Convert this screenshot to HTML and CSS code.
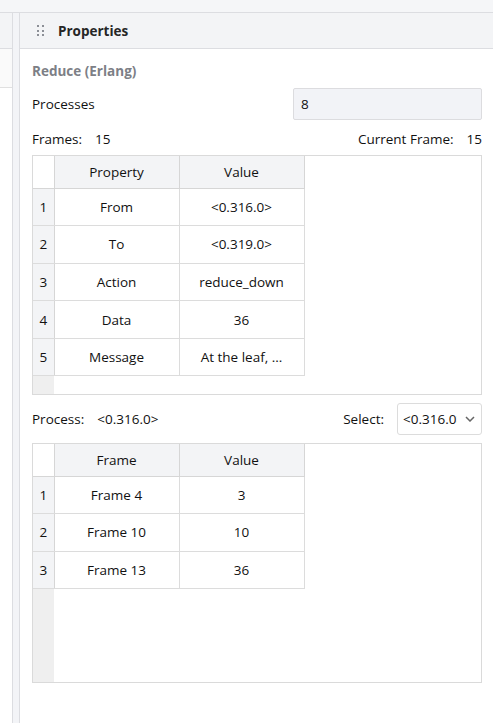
FILE: index.html
```html
<!DOCTYPE html>
<html>
<head>
<meta charset="utf-8">
<link rel="stylesheet" href="styles.css">
</head>
<body>
<div class="topbar"></div>
<div class="main">
  <div class="leftpanel">
    <div class="lp-head"></div>
    <div class="lp-sub"></div>
  </div>
  <div class="splitter"></div>
  <div class="panel">
    <div class="panel-head">
      <svg class="grip" width="8" height="12" viewBox="0 0 8 12">
        <rect x="0" y="0" width="2" height="2" fill="#8c8f96"/>
        <rect x="5" y="0" width="2" height="2" fill="#8c8f96"/>
        <rect x="0" y="5" width="2" height="2" fill="#8c8f96"/>
        <rect x="5" y="5" width="2" height="2" fill="#8c8f96"/>
        <rect x="0" y="9" width="2" height="2" fill="#8c8f96"/>
        <rect x="5" y="9" width="2" height="2" fill="#8c8f96"/>
      </svg>
      <span class="panel-title">Properties</span>
    </div>
    <div class="panel-body">
      <div class="section-title">Reduce (Erlang)</div>
      <div class="field-row">
        <span>Processes</span>
        <input class="num-input" type="text" value="8">
      </div>
      <div class="info-row">
        <span>Frames:<span class="val">15</span></span>
        <span>Current Frame:<span class="val">15</span></span>
      </div>
      <div class="grid-box">
        <table class="grid">
          <thead>
            <tr><th class="corner"></th><th>Property</th><th>Value</th></tr>
          </thead>
          <tbody>
            <tr><td class="rn">1</td><td>From</td><td>&lt;0.316.0&gt;</td></tr>
            <tr><td class="rn">2</td><td>To</td><td>&lt;0.319.0&gt;</td></tr>
            <tr><td class="rn">3</td><td>Action</td><td>reduce_down</td></tr>
            <tr><td class="rn">4</td><td>Data</td><td>36</td></tr>
            <tr><td class="rn">5</td><td>Message</td><td>At the leaf, ...</td></tr>
          </tbody>
        </table>
      </div>
      <div class="field-row proc-row">
        <span>Process:<span class="val">&lt;0.316.0&gt;</span></span>
        <span class="sel-wrap">
          <span class="sel-label">Select:</span>
          <span class="select">
            <select class="sel"><option>&lt;0.316.0&gt;</option></select>
            <svg class="chev" width="10" height="6" viewBox="0 0 10 6"><path d="M1 1 L5 5 L9 1" fill="none" stroke="#666" stroke-width="1.5"/></svg>
          </span>
        </span>
      </div>
      <div class="grid-box">
        <table class="grid">
          <thead>
            <tr><th class="corner"></th><th>Frame</th><th>Value</th></tr>
          </thead>
          <tbody>
            <tr><td class="rn">1</td><td>Frame 4</td><td>3</td></tr>
            <tr><td class="rn">2</td><td>Frame 10</td><td>10</td></tr>
            <tr><td class="rn">3</td><td>Frame 13</td><td>36</td></tr>
          </tbody>
        </table>
      </div>
    </div>
  </div>
</div>
</body>
</html>
```
FILE: styles.css
```css
* { box-sizing: border-box; }
html, body { margin: 0; padding: 0; background: #fff; }
body {
  font-family: "Open Sans", "Noto Sans", sans-serif;
  font-size: 13.5px;
  color: #111;
  width: 493px;
  height: 723px;
  overflow: hidden;
}
.topbar {
  height: 13px;
  background: #f5f6f8;
  border-bottom: 1px solid #dcdde1;
}
.main {
  display: flex;
  height: 710px;
}
.leftpanel {
  width: 12px;
  flex: none;
}
.lp-head {
  height: 36px;
  background: #f3f4f6;
  border-bottom: 1px solid #dcdde1;
}
.lp-sub {
  height: 39px;
  background: #fafafa;
  border-bottom: 1px solid #e0e0e0;
}
.splitter {
  width: 8px;
  flex: none;
  background: #f3f4f7;
  border-left: 1px solid #dcdde1;
  border-right: 1px solid #dcdde1;
}
.panel {
  flex: 1;
  display: flex;
  flex-direction: column;
}
.panel-head {
  height: 36px;
  background: #f3f4f6;
  border-bottom: 1px solid #dcdde1;
  display: flex;
  align-items: center;
  padding-left: 17px;
}
.grip { display: block; margin-top: 1px; }
.panel-title {
  margin-left: 13px;
  font-weight: 700;
  font-size: 13.5px;
  color: #262626;
}
.panel-body {
  padding: 12px 11px 0 12px;
  display: flex;
  flex-direction: column;
}
.section-title {
  height: 20px;
  line-height: 20px;
  font-weight: 700;
  color: #7d7f86;
}
.field-row {
  margin-top: 7px;
  height: 32px;
  display: flex;
  align-items: center;
  justify-content: space-between;
}
.num-input {
  width: 189px;
  height: 32px;
  background: #f2f3f7;
  border: 1px solid #dcdcdf;
  border-radius: 2px;
  padding: 0 7px;
  font: inherit;
  color: #111;
  outline: none;
}
.info-row {
  margin-top: 9px;
  height: 20px;
  line-height: 20px;
  display: flex;
  justify-content: space-between;
}
.val { margin-left: 13px; }
.grid-box {
  margin-top: 6px;
  height: 240px;
  border: 1px solid #dadada;
  background: linear-gradient(to right, #efefef 0, #efefef 21px, #fff 21px);
  overflow: hidden;
}
.grid {
  border-collapse: collapse;
  table-layout: fixed;
}
.grid th, .grid td {
  text-align: center;
  font-weight: 400;
  padding: 0;
  white-space: nowrap;
  overflow: hidden;
  color: #111;
}
.grid th {
  height: 32px;
  background: #f3f4f6;
  border: 1px solid #d6d6d6;
  border-top: none;
  width: 125px;
}
.grid th.corner {
  width: 21px;
  background: #fff;
  border-left: none;
  border-top: none;
}
.grid td {
  height: 37.6px;
  border: 1px solid #dcdcdc;
  background: #fff;
}
.grid td.rn {
  background: #f3f4f6;
  border-left: none;
  border-right: 1px solid #d6d6d6;
}
.proc-row {
  margin-top: 8px;
}
.sel-wrap {
  display: flex;
  align-items: center;
}
.sel-label { margin-right: 13px; }
.select {
  position: relative;
  display: block;
  width: 85px;
  height: 32px;
}
.sel {
  -webkit-appearance: none;
  appearance: none;
  width: 85px;
  height: 32px;
  border: 1px solid #dcdcdc;
  border-radius: 3px;
  background: #fff;
  font: inherit;
  color: #111;
  padding: 0 24px 0 5px;
  outline: none;
}
.chev {
  position: absolute;
  right: 7px;
  top: 13px;
}
.proc-row + .grid-box { margin-top: 8px; }
```
